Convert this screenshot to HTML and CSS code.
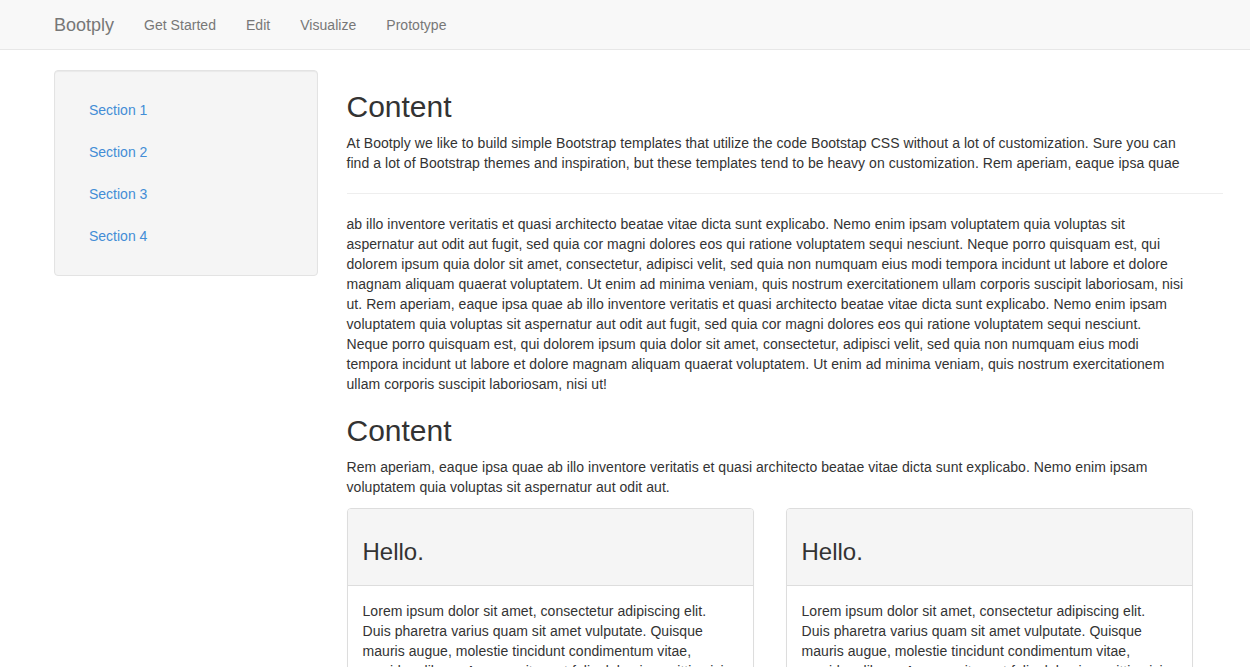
FILE: index.html
```html
<!DOCTYPE html>
<html lang="en">
<head>
<meta charset="utf-8">
<title>Bootply</title>
<link rel="stylesheet" href="styles.css">
</head>
<body>
<header class="navbar">
  <div class="container nav-inner">
    <a class="brand" href="#">Bootply</a>
    <nav class="nav-links">
      <a href="#">Get Started</a>
      <a href="#">Edit</a>
      <a href="#">Visualize</a>
      <a href="#">Prototype</a>
    </nav>
  </div>
</header>
<div class="container layout">
  <aside class="sidebar">
    <div class="well">
      <ul class="side-nav">
        <li><a href="#">Section 1</a></li>
        <li><a href="#">Section 2</a></li>
        <li><a href="#">Section 3</a></li>
        <li><a href="#">Section 4</a></li>
      </ul>
    </div>
  </aside>
  <main class="main">
    <h2>Content</h2>
    <p>At Bootply we like to build simple Bootstrap templates that utilize the code Bootstap CSS without a lot of customization. Sure you can find a lot of Bootstrap themes and inspiration, but these templates tend to be heavy on customization. Rem aperiam, eaque ipsa quae</p>
    <hr class="divider">
    <p>ab illo inventore veritatis et quasi architecto beatae vitae dicta sunt explicabo. Nemo enim ipsam voluptatem quia voluptas sit aspernatur aut odit aut fugit, sed quia cor magni dolores eos qui ratione voluptatem sequi nesciunt. Neque porro quisquam est, qui dolorem ipsum quia dolor sit amet, consectetur, adipisci velit, sed quia non numquam eius modi tempora incidunt ut labore et dolore magnam aliquam quaerat voluptatem. Ut enim ad minima veniam, quis nostrum exercitationem ullam corporis suscipit laboriosam, nisi ut. Rem aperiam, eaque ipsa quae ab illo inventore veritatis et quasi architecto beatae vitae dicta sunt explicabo. Nemo enim ipsam voluptatem quia voluptas sit aspernatur aut odit aut fugit, sed quia cor magni dolores eos qui ratione voluptatem sequi nesciunt. Neque porro quisquam est, qui dolorem ipsum quia dolor sit amet, consectetur, adipisci velit, sed quia non numquam eius modi tempora incidunt ut labore et dolore magnam aliquam quaerat voluptatem. Ut enim ad minima veniam, quis nostrum exercitationem ullam corporis suscipit laboriosam, nisi ut!</p>
    <h2>Content</h2>
    <p>Rem aperiam, eaque ipsa quae ab illo inventore veritatis et quasi architecto beatae vitae dicta sunt explicabo. Nemo enim ipsam voluptatem quia voluptas sit aspernatur aut odit aut.</p>
    <div class="panels">
      <div class="panel">
        <div class="panel-heading"><h3>Hello.</h3></div>
        <div class="panel-body">Lorem ipsum dolor sit amet, consectetur adipiscing elit. Duis pharetra varius quam sit amet vulputate. Quisque mauris augue, molestie tincidunt condimentum vitae, gravida a libero. Aenean sit amet felis dolor, in sagittis nisi. Sed ac orci quis tortor imperdiet venenatis. Duis elementum auctor accumsan. Aliquam in felis sit amet augue.</div>
      </div>
      <div class="panel">
        <div class="panel-heading"><h3>Hello.</h3></div>
        <div class="panel-body">Lorem ipsum dolor sit amet, consectetur adipiscing elit. Duis pharetra varius quam sit amet vulputate. Quisque mauris augue, molestie tincidunt condimentum vitae, gravida a libero. Aenean sit amet felis dolor, in sagittis nisi. Sed ac orci quis tortor imperdiet venenatis. Duis elementum auctor accumsan. Aliquam in felis sit amet augue.</div>
      </div>
    </div>
  </main>
</div>
</body>
</html>
```
FILE: styles.css
```css
* { box-sizing: border-box; }
html, body { margin: 0; padding: 0; }
body {
  font-family: "Liberation Sans", Arial, Helvetica, sans-serif;
  font-size: 14px;
  line-height: 20px;
  color: #333333;
  background: #ffffff;
}
a { text-decoration: none; }

.container {
  width: 1170px;
  margin: 0 auto;
  padding: 0 15px;
}

.navbar {
  background: #f8f8f8;
  border-bottom: 1px solid #e7e7e7;
  height: 50px;
  margin-bottom: 20px;
}
.nav-inner {
  display: flex;
  align-items: center;
  height: 49px;
}
.brand {
  font-size: 18px;
  line-height: 20px;
  color: #777777;
  padding: 0 15px 0 0;
  margin-left: -1px;
}
.nav-links { display: flex; }
.nav-links a {
  color: #777777;
  font-size: 14px;
  line-height: 20px;
  padding: 0 15px;
  letter-spacing: 0.03px;
}

.layout {
  display: grid;
  grid-template-columns: 262.5px 1fr;
  column-gap: 30px;
  align-items: start;
}

.well {
  background: #f5f5f5;
  border: 1px solid #e3e3e3;
  border-radius: 4px;
  box-shadow: inset 0 1px 1px rgba(0,0,0,0.05);
  padding: 19px;
  margin-left: -1px;
}
.side-nav {
  list-style: none;
  margin: 0;
  padding: 0;
  display: flex;
  flex-direction: column;
  gap: 2px;
}
.side-nav a {
  display: block;
  padding: 10px 15px;
  color: #438dd6;
}

.main { margin-left: -1px; }
.main h2 {
  font-size: 30px;
  font-weight: 500;
  line-height: 1.1;
  margin: 20px 0 10px;
}
.main p {
  margin: 0 9px 10px 0;
  letter-spacing: 0.05px;
}
.divider {
  border: 0;
  border-top: 1px solid #eeeeee;
  margin: 20px -28px 20px 0;
}

.panels {
  display: grid;
  grid-template-columns: 407px 407px;
  column-gap: 32px;
  margin-top: 11px;
}
.panel {
  border: 1px solid #dddddd;
  border-radius: 4px;
  background: #ffffff;
  margin-bottom: 20px;
  box-shadow: 0 1px 1px rgba(0,0,0,0.05);
}
.panel-heading {
  background: #f5f5f5;
  border-bottom: 1px solid #dddddd;
  border-radius: 3px 3px 0 0;
  padding: 10px 15px;
}
.panel-heading h3 {
  font-size: 24px;
  font-weight: 500;
  line-height: 1.1;
  margin: 20px 0 10px;
}
.panel-body {
  padding: 15px;
  letter-spacing: 0.05px;
}
```
